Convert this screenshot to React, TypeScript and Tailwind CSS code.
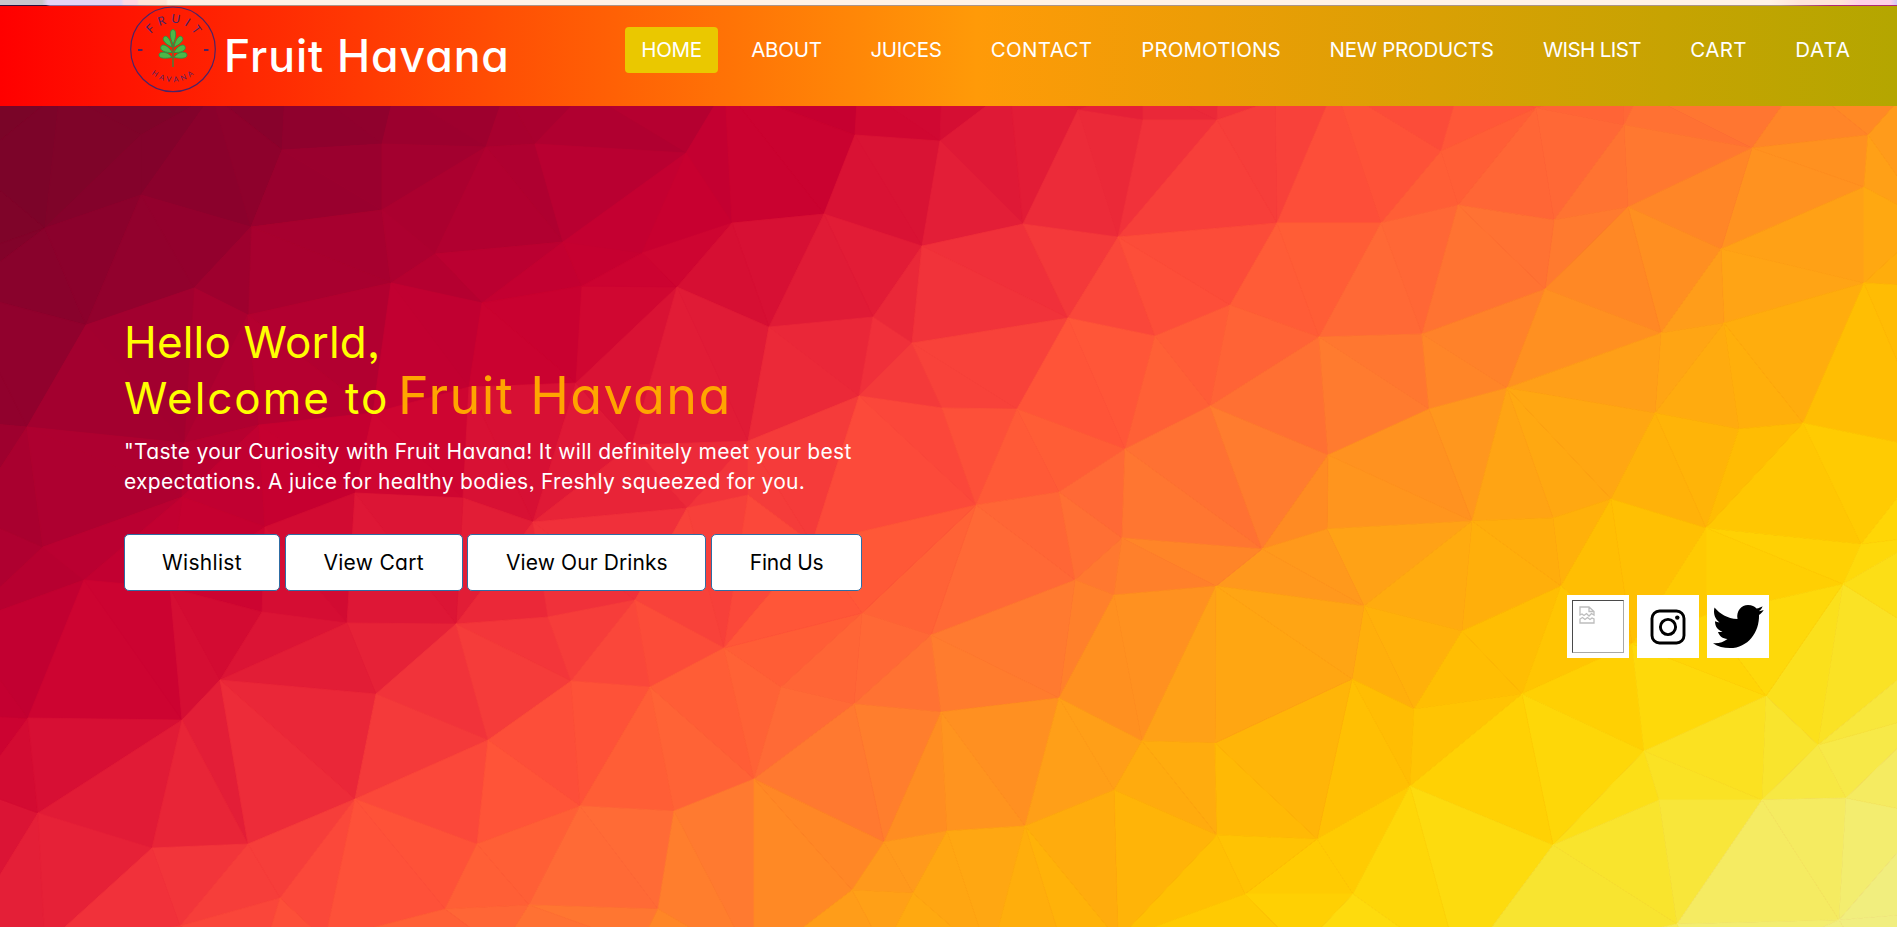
import React from "react";

type Point = [number, number];
type Triangle = [number, number, number];

const WIDTH = 1897;
const HEIGHT = 927;

/* Vertices of the low-poly backdrop. */
const points: Point[] = [
  [-40, 60], [-30, 165], [-60, 265], [-40, 292], [-50, 420], [-30, 515], [-40, 625], [-30, 715], [-25, 790], [-40, 940],
  [60, 92], [212, 95], [286, 70], [395, 90], [505, 92], [585, 92], [725, 88], [858, 85], [942, 80], [1010, 88],
  [1143, 85], [1219, 85], [1275, 100], [1335, 86], [1460, 85], [1536, 108], [1622, 85], [1640, 92], [1800, 80], [1925, 70],
  [141, 135], [45, 228], [141, 195], [282, 150], [251, 227], [382, 144], [382, 210], [486, 147], [535, 144], [563, 242],
  [435, 254], [391, 283], [482, 303], [582, 286], [194, 288], [248, 315], [86, 325], [27, 427], [184, 443], [259, 425],
  [373, 413], [469, 387], [576, 383], [182, 497], [463, 498], [533, 522], [355, 493], [265, 527], [43, 547], [632, 445],
  [686, 153], [855, 135], [940, 141], [1078, 110], [1143, 120], [1217, 120], [732, 223], [824, 214], [922, 246], [1023, 224],
  [1118, 237], [1277, 223], [677, 287], [642, 253], [769, 327], [873, 317], [912, 343], [1068, 318], [1155, 336], [1230, 305],
  [859, 396], [942, 408], [1017, 409], [748, 441], [1125, 449], [1210, 406], [976, 505], [1059, 492], [748, 495], [687, 508],
  [1441, 151], [1624, 125], [1752, 148], [1868, 135], [1864, 187], [1381, 223], [1458, 205], [1554, 220], [1628, 207], [1721, 249],
  [1864, 283], [1930, 222], [1319, 337], [1422, 334], [1545, 289], [1661, 333], [1724, 323], [1507, 388], [1429, 409], [1328, 455],
  [1655, 413], [1739, 429], [1803, 423], [1611, 499], [1553, 518], [1472, 521], [1327, 529], [1262, 549], [1706, 528], [1861, 544],
  [1843, 584], [1561, 586], [1364, 606], [1462, 631], [1352, 679], [1414, 709], [1522, 694], [1632, 644], [1766, 696], [1644, 751],
  [1818, 745], [1410, 786], [1553, 845], [1659, 800], [1762, 800], [1846, 798], [1317, 839], [1353, 894], [1839, 920], [1677, 924],
  [1935, 287], [1935, 450], [1925, 536], [1940, 645], [1935, 712], [1930, 815], [1960, 910], [1706, 615],
  [84, 580], [28, 718], [182, 720], [170, 588], [262, 612], [347, 623], [456, 624], [548, 617], [635, 600], [220, 680],
  [376, 694], [571, 681], [488, 740], [355, 799], [38, 813], [152, 848], [248, 844], [280, 898], [180, 926], [477, 844],
  [580, 806], [445, 909], [529, 905], [325, 940], [45, 945], [1075, 580], [1122, 538], [1114, 595], [1216, 586], [724, 648],
  [862, 613], [931, 635], [650, 687], [781, 687], [854, 704], [941, 712], [1059, 698], [1142, 741], [1215, 743], [1114, 790],
  [1217, 835], [754, 779], [674, 811], [884, 842], [947, 831], [1025, 826], [852, 890], [913, 893], [658, 909], [1245, 894],
  [754, 965], [884, 950], [640, 945], [1062, 945], [1118, 940], [1300, 950], [1460, 970], [1700, 980], [1870, 970], [500, 950],
  [812, 543], [260, 965], [990, 960],
];

/* Backdrop colours along the top-left to bottom-right diagonal. */
const ramp: [number, number, number, number][] = [
  [0.26, 122, 5, 40], [0.44, 132, 2, 43], [0.68, 152, 0, 46], [0.81, 168, 0, 47], [0.95, 177, 0, 48], [1.06, 192, 0, 49],
  [1.18, 201, 0, 48], [1.28, 210, 10, 50], [1.42, 222, 24, 54], [1.54, 231, 35, 55], [1.63, 240, 48, 58], [1.71, 244, 58, 58],
  [1.83, 251, 72, 58], [1.93, 255, 85, 56], [2.03, 255, 95, 54], [2.14, 255, 106, 54], [2.28, 255, 123, 47], [2.41, 255, 141, 34],
  [2.5, 255, 154, 28], [2.61, 255, 167, 18], [2.74, 255, 175, 11], [2.85, 255, 189, 3], [3.01, 255, 204, 2], [3.1, 255, 213, 5],
  [3.21, 253, 221, 16], [3.31, 250, 226, 37], [3.38, 248, 229, 50], [3.47, 247, 233, 74], [3.57, 244, 236, 104], [3.74, 241, 238, 128],
];

function colourAt(x: number, y: number): string {
  const t = x / 838 + y / 608;
  if (t <= ramp[0][0]) return `rgb(${ramp[0].slice(1).join(",")})`;
  for (let i = 1; i < ramp.length; i++) {
    const a = ramp[i - 1];
    const b = ramp[i];
    if (t <= b[0]) {
      const k = (t - a[0]) / (b[0] - a[0]);
      const mix = (n: number) => Math.round(a[n] + (b[n] - a[n]) * k);
      return `rgb(${mix(1)},${mix(2)},${mix(3)})`;
    }
  }
  return `rgb(${ramp[ramp.length - 1].slice(1).join(",")})`;
}

function inCircumcircle(p: Point, a: Point, b: Point, c: Point): boolean {
  const ax = a[0] - p[0], ay = a[1] - p[1];
  const bx = b[0] - p[0], by = b[1] - p[1];
  const cx = c[0] - p[0], cy = c[1] - p[1];
  const det =
    (ax * ax + ay * ay) * (bx * cy - cx * by) -
    (bx * bx + by * by) * (ax * cy - cx * ay) +
    (cx * cx + cy * cy) * (ax * by - bx * ay);
  const turn = (b[0] - a[0]) * (c[1] - a[1]) - (b[1] - a[1]) * (c[0] - a[0]);
  return turn > 0 ? det > 0 : det < 0;
}

/* Bowyer-Watson triangulation. */
function triangulate(source: Point[]): Triangle[] {
  const n = source.length;
  const all: Point[] = [...source, [-20000, -10000], [22000, -10000], [900, 30000]];
  let triangles: Triangle[] = [[n, n + 1, n + 2]];
  for (let i = 0; i < n; i++) {
    const edges = new Map<string, [number, number]>();
    const kept: Triangle[] = [];
    for (const t of triangles) {
      if (!inCircumcircle(all[i], all[t[0]], all[t[1]], all[t[2]])) {
        kept.push(t);
        continue;
      }
      const sides: [number, number][] = [[t[0], t[1]], [t[1], t[2]], [t[2], t[0]]];
      for (const [u, v] of sides) {
        const key = u < v ? `${u}-${v}` : `${v}-${u}`;
        if (edges.has(key)) edges.delete(key);
        else edges.set(key, [u, v]);
      }
    }
    edges.forEach(([u, v]) => kept.push([u, v, i]));
    triangles = kept;
  }
  return triangles.filter((t) => t.every((v) => v < n));
}

const facets = triangulate(points).map((t) => {
  const [a, b, c] = t.map((i) => points[i]);
  return {
    d: `${a} ${b} ${c}`,
    fill: colourAt((a[0] + b[0] + c[0]) / 3, (a[1] + b[1] + c[1]) / 3),
  };
});

function Backdrop() {
  return (
    <svg className="absolute inset-0 h-full w-full" viewBox={`0 0 ${WIDTH} ${HEIGHT}`} preserveAspectRatio="none" aria-hidden="true">
      {facets.map((f, i) => (
        <polygon key={i} points={f.d} fill={f.fill} stroke={f.fill} strokeWidth={0.8} />
      ))}
    </svg>
  );
}

function Logo() {
  const ink = "#4a2468";
  return (
    <svg className="h-[88px] w-[88px]" viewBox="0 0 88 88">
      <circle cx="44" cy="43.300" r="42.300" fill="none" stroke={ink} strokeWidth="1.2" />
      <path id="upper" d="M17.500 43.500 A26.500 26.500 0 0 1 70.500 43.500" fill="none" />
      <path id="lower" d="M11.500 43.500 A32.500 32.500 0 0 0 76.500 43.500" fill="none" />
      <text fill={ink} fontSize="12" fontFamily="Lato, sans-serif" letterSpacing="4.500" textAnchor="middle">
        <textPath href="#upper" startOffset="53%">FRUIT</textPath>
      </text>
      <text fill={ink} fontSize="7.500" fontFamily="Lato, sans-serif" letterSpacing="3" textAnchor="middle">
        <textPath href="#lower" startOffset="51%">HAVANA</textPath>
      </text>
      <path d="M9 44h4.500M75 44h4.500" stroke={ink} strokeWidth="1.8" />
      <g fill="#4cb848" stroke="#179a48" strokeWidth=".8">
        <path d="M44 61V34" strokeWidth="1.2" />
        <path d="M44 38c-3-5-4-14.500 0-14.500s3 9.500 0 14.500z" />
        <path d="M43 41c-5-2-11-7-8-10s7 4 8 10zM45 41c5-2 11-7 8-10s-7 4-8 10z" />
        <path d="M43 46.500c-6 .5-13-2-11-6s9 1 11 6zM45 46.500c6 .5 13-2 11-6s-9 1-11 6z" />
        <path d="M43 51.500c-6 1-13 1.500-13-2.500s9-4 13 2.500zM45 51.500c6 1 13 1.500 13-2.500s-9-4-13 2.500z" />
      </g>
    </svg>
  );
}

const links = [
  { label: "HOME", box: "w-[93px] tracking-[-0.3px] bg-[#eac800]" },
  { label: "ABOUT", box: "w-[102px] tracking-[-0.2px]" },
  { label: "JUICES", box: "w-[102px] tracking-[-0.3px]" },
  { label: "CONTACT", box: "w-[134px] tracking-[0.35px]" },
  { label: "PROMOTIONS", box: "w-[170px] tracking-[0.1px]" },
  { label: "NEW PRODUCTS", box: "w-[196px] tracking-[-0.25px]" },
  { label: "WISH LIST", box: "w-[130px] tracking-[-0.6px]" },
  { label: "CART", box: "w-[88px] tracking-[0.3px]" },
  { label: "DATA", box: "w-[86px] tracking-[0.9px]" },
];

function Header() {
  return (
    <header className="relative flex h-[100px] items-start bg-[linear-gradient(to_right,#ff0000,#ff9a08_51.5%,#b4a600)] text-white">
      <div className="flex w-[625px] shrink-0 pl-[129px]">
        <Logo />
        <span className="mt-[19px] ml-[7px] text-[44.500px] leading-[62px] font-medium tracking-[0.950px] whitespace-nowrap">Fruit Havana</span>
      </div>
      <nav className="mt-[21px] flex gap-[17.500px]">
        {links.map((l) => (
          <a key={l.label} className={`flex h-[46px] items-center justify-center rounded-[4px] text-[20.500px] whitespace-nowrap ${l.box}`}>
            {l.label}
          </a>
        ))}
      </nav>
    </header>
  );
}

const buttons = [
  { label: "Wishlist", box: "w-[156px] tracking-[0.3px]" },
  { label: "View Cart", box: "w-[178px] tracking-[0.3px]" },
  { label: "View Our Drinks", box: "w-[239px] tracking-[0.1px]" },
  { label: "Find Us", box: "w-[151px] tracking-[-0.25px]" },
];

function BrokenImage() {
  return (
    <div className="h-[53px] w-[52px] border border-t-[#4a4a4a] border-r-[#a8a8a8] border-b-[#a8a8a8] border-l-[#4a4a4a] pt-[5px] pl-[6px]">
      <svg width="16" height="18" viewBox="0 0 16 18" fill="none" stroke="#bdbdbd" strokeWidth="1.3">
        <path d="M1 9V1h9l5 4.500V9l-2.500-1.500L10 10 7.500 7.500 5 9.500 3 8zM10 1v4.500h5" />
        <path d="M1 17v-4l2.500-1.500L6 13.500 8.500 11.500l2.500 2 2-1.500 2 1V17z" />
      </svg>
    </div>
  );
}

function Instagram() {
  return (
    <svg width="36" height="36" viewBox="0 0 36 36" fill="none" stroke="#000" strokeWidth="2.900">
      <rect x="2" y="2" width="32" height="32" rx="7.500" />
      <circle cx="18" cy="18" r="7.600" />
      <circle cx="27.300" cy="8.600" r="2.200" fill="#000" stroke="none" />
    </svg>
  );
}

function Twitter() {
  return (
    <svg width="52" height="45" viewBox="0 0 52 45">
      <path d="M2.500 3.500C8 10 15 14.500 25.500 15 24 7 29.500 1 36 1c4 0 6.500 1.500 8.500 3.500 2.500-.5 4.500-1.200 6-2.300-.5 2-1.700 3.600-3.800 5 1.800-.1 3.500-.6 5-1.300-1.200 2-2.800 3.600-4.700 5C47.500 28 36 44 18 44c-6.500 0-12-1.500-17-4.800 5.500.5 10.500-1 14.500-4.200-5-.3-8-3-9.500-7 1.800.2 3.200.1 4.500-.3C5.500 26 3 22.500 3 17.300c1.500.7 3 1.200 4.500 1.200C3 15 1 9.500 2.500 3.500z" fill="#000" />
    </svg>
  );
}

function Hero() {
  return (
    <main className="relative flex flex-1 justify-between pr-[128px] pl-[124px]">
      <div className="pt-[208px]">
        <h1 className="text-[44px] leading-[56px] font-normal whitespace-nowrap text-[#ffff00]">
          <span className="block tracking-[0.2px]">Hello World,</span>
          <span className="-mt-[2px] flex items-baseline">
            <span className="w-[274px] tracking-[1.95px]">Welcome to</span>
            <span className="text-[52px] leading-[56px] tracking-[1.400px] text-[#ffa500]">Fruit Havana</span>
          </span>
        </h1>
        <p className="mt-[11px] text-[21px] leading-[30px] tracking-[0.290px] whitespace-nowrap text-white">
          <span className="block">"Taste your Curiosity with Fruit Havana! It will definitely meet your best</span>
          <span className="block">expectations. A juice for healthy bodies, Freshly squeezed for you.</span>
        </p>
        <div className="mt-[37px] flex gap-[4.700px]">
          {buttons.map((b) => (
            <button key={b.label} className={`h-[57px] rounded-[5px] border border-[#2e6da4] bg-white text-[21px] whitespace-nowrap text-black ${b.box}`}>
              {b.label}
            </button>
          ))}
        </div>
      </div>
      <div className="flex gap-[8px] pt-[489px]">
        <div className="flex h-[63px] w-[62px] items-center justify-center bg-white"><BrokenImage /></div>
        <div className="flex h-[63px] w-[62px] items-center justify-center bg-white"><Instagram /></div>
        <div className="flex h-[63px] w-[62px] items-center justify-center bg-white"><Twitter /></div>
      </div>
    </main>
  );
}

export default function App() {
  return (
    <div className="relative flex h-[927px] w-[1897px] flex-col overflow-hidden bg-[#c00030] font-['Inter',sans-serif] [font-feature-settings:'cv11','ss03']">
      <Backdrop />
      <div className="relative h-[5px] bg-[linear-gradient(to_right,#c8c5cc_0_42px,#e4d4f6_48px_121px,#ffd8e2_124px_137px,#ffe6d8_139px_166px,#fff2e6_168px_1770px,#ffe4da_1800px_1840px,#ffd0e8_1860px_1890px,#d0c8f8_1897px)]" />
      <div className="relative h-px bg-[linear-gradient(to_right,#30103c_0_46px,#8a70a8_50px_120px,#ac9488_160px_1780px,#b02878_1830px)]" />
      <Header />
      <Hero />
    </div>
  );
}
